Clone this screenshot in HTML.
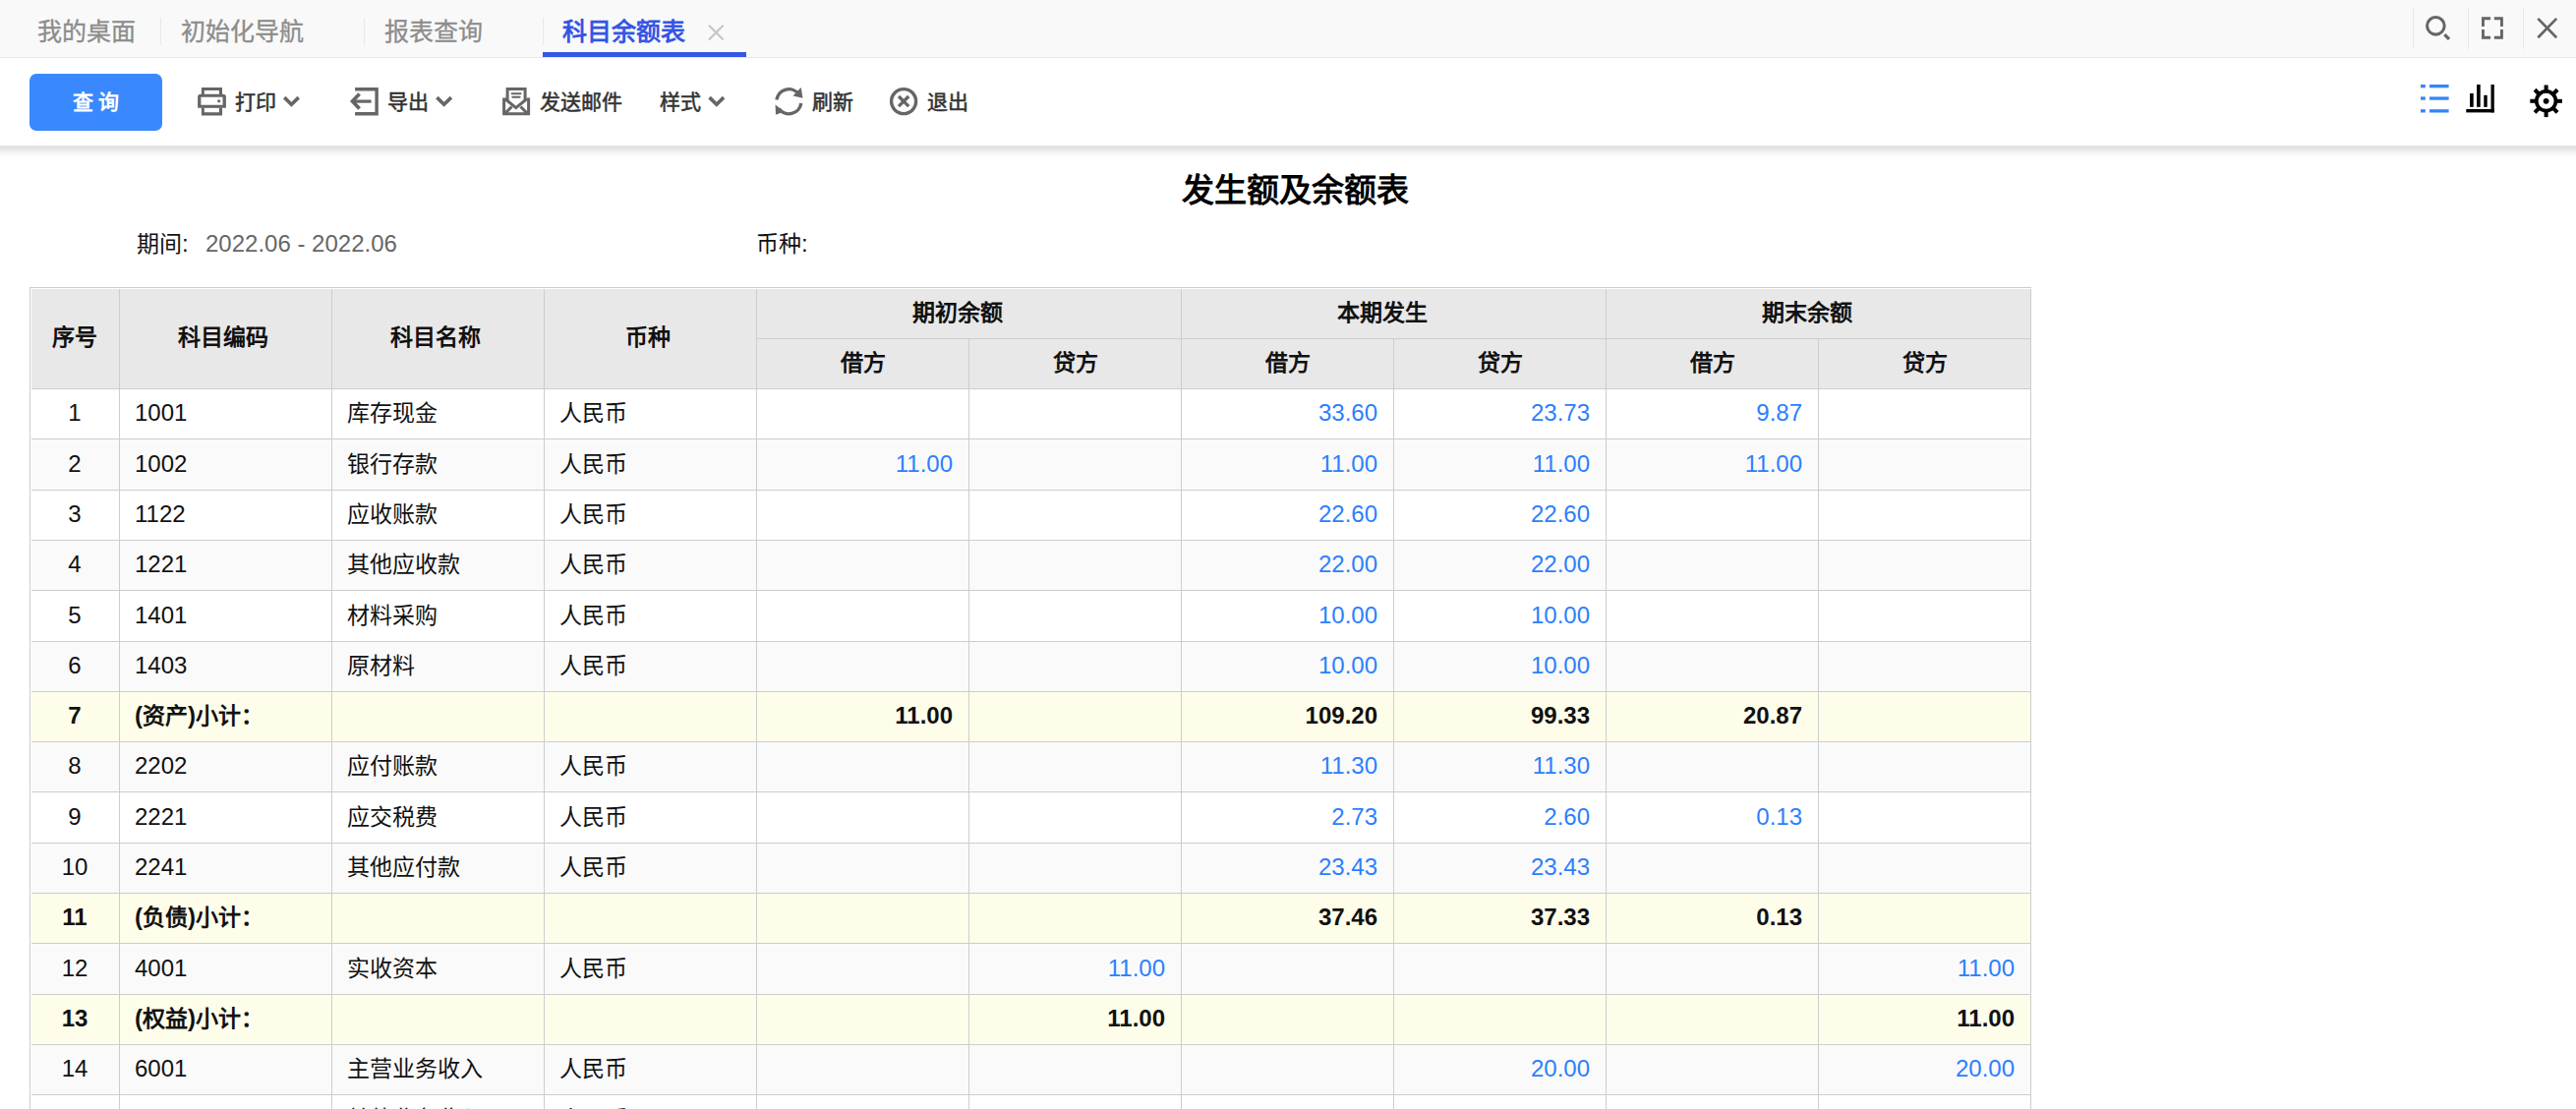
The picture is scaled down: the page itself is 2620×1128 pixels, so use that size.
<!DOCTYPE html>
<html lang="zh-CN">
<head>
<meta charset="utf-8">
<style>
html,body{margin:0;padding:0;}
body{width:2620px;height:1128px;overflow:hidden;position:relative;background:#fff;font-family:"Liberation Sans",sans-serif;color:#000;}
i{font-style:normal;}
#tabbar{position:absolute;left:0;top:0;width:2620px;height:58px;background:#f9f9f9;border-bottom:1px solid #e3e6f0;}
.tab{position:absolute;top:0;height:58px;line-height:64px;font-size:25px;color:#8c8c8c;white-space:nowrap;-webkit-text-stroke:0.3px #8c8c8c;}
.tab.act{color:#3356e6;font-weight:bold;-webkit-text-stroke:0;}
.tsep{position:absolute;top:18px;width:1px;height:28px;background:#e6e8ef;}
.rsep{position:absolute;top:8px;width:1px;height:42px;background:#e6e8ef;}
#uline{position:absolute;left:552px;top:53px;width:207px;height:5px;background:#3356e6;}
#toolbar{position:absolute;left:0;top:59px;width:2620px;height:89px;background:#fff;}
#shadow{position:absolute;left:0;top:148px;width:2620px;height:13px;background:linear-gradient(#e2e2e2 0%,#e4e4e4 20%,#f0f0f0 45%,#f9f9f9 70%,#fff 100%);}
#qbtn{position:absolute;left:30px;top:75px;width:135px;height:58px;border-radius:7px;background:#3a88fd;color:#fff;font-weight:bold;font-size:21px;line-height:58px;text-align:center;}
.tb{position:absolute;top:75px;height:58px;line-height:58px;font-size:21px;color:#333;-webkit-text-stroke:0.55px #333;white-space:nowrap;}
svg.ov{position:absolute;left:0;top:0;}
#title{position:absolute;top:160px;left:0;width:2634px;text-align:center;font-size:33px;font-weight:bold;line-height:68px;}
.meta{position:absolute;top:228px;line-height:40px;font-size:24px;white-space:nowrap;}
.meta i{font-size:23px;}
.ln{position:absolute;background:#cdcdcd;}
.hbg{position:absolute;background:#e8e8e8;}
.rbg{position:absolute;}
.odd{background:#fff;}
.even{background:#fafafa;}
.sub{background:#fefdea;}
.c{position:absolute;display:flex;align-items:center;white-space:nowrap;font-size:24px;}
.c span{line-height:26px;position:relative;top:-1px;}
.c i{font-size:23px;}
.c.ctr{justify-content:center;}
.c.lft{justify-content:flex-start;padding-left:15px;box-sizing:border-box;}
.c.rgt{justify-content:flex-end;padding-right:16px;box-sizing:border-box;}
.hd{font-weight:bold;color:#111;}
.td{color:#111;}
.b{font-weight:bold;}
.blue{color:#2b80fd;}
</style>
</head>
<body>
<div id="tabbar"></div>
<div class="tab" style="left:38px">我的桌面</div>
<div class="tsep" style="left:163px"></div>
<div class="tab" style="left:184px">初始化导航</div>
<div class="tsep" style="left:370px"></div>
<div class="tab" style="left:391px">报表查询</div>
<div class="tsep" style="left:552px"></div>
<div class="tab act" style="left:572px">科目余额表</div>
<div id="uline"></div>
<div class="rsep" style="left:2454px"></div>
<div class="rsep" style="left:2510px"></div>
<div class="rsep" style="left:2566px"></div>
<div id="toolbar"></div>
<div id="shadow"></div>
<div id="qbtn">查 询</div>
<div class="tb" style="left:239px">打印</div>
<div class="tb" style="left:394px">导出</div>
<div class="tb" style="left:549px">发送邮件</div>
<div class="tb" style="left:671px">样式</div>
<div class="tb" style="left:826px">刷新</div>
<div class="tb" style="left:943px">退出</div>
<svg class="ov" width="2620" height="160" viewBox="0 0 2620 160">
<!-- tab close -->
<path d="M721 25.8L735.7 40.5M735.7 25.8L721 40.5" stroke="#c6c6c6" stroke-width="2.2" fill="none"/>
<!-- search -->
<g stroke="#666" fill="none">
<circle cx="2477.35" cy="26.3" r="8.8" stroke-width="3.05"/>
<path d="M2486.3 35.1L2491 39.8" stroke-width="3.3"/>
<path d="M2525.45 26.9V18.75H2533.1M2536.8 18.75H2544.45V26.9M2544.45 30.1V38.25H2536.8M2533.1 38.25H2525.45V30.1" stroke-width="2.9"/>
<path d="M2581.3 18.9L2600.2 38.2M2600.2 18.9L2581.3 38.2" stroke-width="2.7"/>
</g>
<!-- toolbar icons -->
<g fill="#666" fill-rule="evenodd">
<path d="M204.9 89H226V96.3H204.9ZM207.8 92H222.9V96.3H207.8Z"/>
<path d="M204.1 95.8H226.9A3 3 0 0 1 229.9 98.8V109.7H201.1V98.8A3 3 0 0 1 204.1 95.8ZM204.4 98.7H226.5V106.8H204.4Z"/>
<path d="M204.9 109.4H226V117.4H204.9ZM207.8 109.7H222.9V114.2H207.8Z"/>
<circle cx="222.7" cy="102.8" r="1.6"/>
</g>
<g stroke="#666" fill="none" stroke-width="3.6" stroke-linejoin="miter">
<path d="M289.2 99.1L296.4 106.2L303.7 99.1"/>
<path d="M444.4 99.1L451.6 106.2L458.9 99.1"/>
<path d="M721.6 99.1L728.8 106.2L736.1 99.1"/>
</g>
<g stroke="#666" fill="none" stroke-width="3.4">
<path d="M361.1 90.7H383.1V115.7H361.1"/>
<path d="M377.6 103.1H359.5" stroke-width="3.2"/>
<path d="M365.6 95.6L358.5 103.1L365.6 110.6" stroke-width="3.7"/>
</g>
<g stroke="#666" fill="none" stroke-width="3">
<path d="M516.1 102.5V90.5H534.1V102.5"/>
<path d="M512.6 99.5V115.8H537.6V99.5"/>
<path d="M513.5 100.5L524.8 109.6L536 100.5"/>
<path d="M513 116L520.5 108.5M537 116L529.5 108.5"/>
</g>
<g stroke="#666" fill="none" stroke-width="1.9" stroke-linecap="round">
<path d="M520.6 95.2H529.6M521.3 98.8H528.7"/>
</g>
<!-- refresh -->
<g stroke="#666" fill="none" stroke-width="3.4">
<path d="M789.9 101.5A12.5 12.5 0 0 1 812.5 96"/>
<path d="M814.8 105A12.5 12.5 0 0 1 792.2 110.5"/>
</g>
<g fill="#666">
<path d="M814.7 88.9L816.5 99.7L806.5 97.5Z"/>
<path d="M788.6 106.4L789 116.8L797.5 113.5Z"/>
</g>
<!-- exit -->
<g stroke="#666" fill="none">
<circle cx="919.1" cy="103.1" r="12.5" stroke-width="3.4"/>
<path d="M914 98L924.2 108.2M924.2 98L914 108.2" stroke-width="3.2"/>
</g>
<!-- list icon -->
<g fill="#3385fd">
<rect x="2462" y="86" width="4.8" height="3.3"/><rect x="2471" y="86" width="19.6" height="3.3"/>
<rect x="2462" y="98.4" width="4.8" height="3.3"/><rect x="2471" y="98.4" width="19.6" height="3.3"/>
<rect x="2462" y="111.2" width="4.8" height="3.3"/><rect x="2471" y="111.2" width="19.6" height="3.3"/>
</g>
<!-- bar chart -->
<g fill="#000">
<rect x="2512.1" y="95" width="3.6" height="13.85"/>
<rect x="2519.1" y="86" width="3.6" height="22.85"/>
<rect x="2526.3" y="96.8" width="3.4" height="12.05"/>
<rect x="2533.5" y="86" width="3.3" height="28.4"/>
<rect x="2508.3" y="111" width="28.5" height="3.4"/>
</g>
<!-- gear -->
<g transform="translate(2589.6 102.8)">
<circle r="9.85" stroke="#000" stroke-width="3.7" fill="none"/>
<circle r="2.9" fill="#000"/>
<g fill="#000">
<rect x="-2" y="-16.3" width="4" height="7"/>
<rect x="-2" y="-16.3" width="4" height="7" transform="rotate(45)"/>
<rect x="-2" y="-16.3" width="4" height="7" transform="rotate(90)"/>
<rect x="-2" y="-16.3" width="4" height="7" transform="rotate(135)"/>
<rect x="-2" y="-16.3" width="4" height="7" transform="rotate(180)"/>
<rect x="-2" y="-16.3" width="4" height="7" transform="rotate(225)"/>
<rect x="-2" y="-16.3" width="4" height="7" transform="rotate(270)"/>
<rect x="-2" y="-16.3" width="4" height="7" transform="rotate(315)"/>
</g>
</g>
</svg>

<div id="tbl">
<div class="hbg" style="left:32px;top:294px;width:2033px;height:101px"></div>
<div class="ln" style="left:30px;top:292px;width:2036px;height:1px"></div>
<div class="ln" style="left:30px;top:292px;width:1px;height:836px"></div>
<div class="rbg odd" style="left:32px;top:396px;width:2033px;height:50px"></div>
<div class="rbg even" style="left:32px;top:447px;width:2033px;height:51px"></div>
<div class="rbg odd" style="left:32px;top:499px;width:2033px;height:50px"></div>
<div class="rbg even" style="left:32px;top:550px;width:2033px;height:50px"></div>
<div class="rbg odd" style="left:32px;top:601px;width:2033px;height:51px"></div>
<div class="rbg even" style="left:32px;top:653px;width:2033px;height:50px"></div>
<div class="rbg sub" style="left:32px;top:704px;width:2033px;height:50px"></div>
<div class="rbg even" style="left:32px;top:755px;width:2033px;height:50px"></div>
<div class="rbg odd" style="left:32px;top:806px;width:2033px;height:51px"></div>
<div class="rbg even" style="left:32px;top:858px;width:2033px;height:50px"></div>
<div class="rbg sub" style="left:32px;top:909px;width:2033px;height:50px"></div>
<div class="rbg even" style="left:32px;top:960px;width:2033px;height:51px"></div>
<div class="rbg sub" style="left:32px;top:1012px;width:2033px;height:50px"></div>
<div class="rbg even" style="left:32px;top:1063px;width:2033px;height:50px"></div>
<div class="rbg odd" style="left:32px;top:1114px;width:2033px;height:50px"></div>
<div class="ln" style="left:32px;top:395px;width:2034px;height:1px"></div>
<div class="ln" style="left:32px;top:446px;width:2034px;height:1px"></div>
<div class="ln" style="left:32px;top:498px;width:2034px;height:1px"></div>
<div class="ln" style="left:32px;top:549px;width:2034px;height:1px"></div>
<div class="ln" style="left:32px;top:600px;width:2034px;height:1px"></div>
<div class="ln" style="left:32px;top:652px;width:2034px;height:1px"></div>
<div class="ln" style="left:32px;top:703px;width:2034px;height:1px"></div>
<div class="ln" style="left:32px;top:754px;width:2034px;height:1px"></div>
<div class="ln" style="left:32px;top:805px;width:2034px;height:1px"></div>
<div class="ln" style="left:32px;top:857px;width:2034px;height:1px"></div>
<div class="ln" style="left:32px;top:908px;width:2034px;height:1px"></div>
<div class="ln" style="left:32px;top:959px;width:2034px;height:1px"></div>
<div class="ln" style="left:32px;top:1011px;width:2034px;height:1px"></div>
<div class="ln" style="left:32px;top:1062px;width:2034px;height:1px"></div>
<div class="ln" style="left:32px;top:1113px;width:2034px;height:1px"></div>
<div class="ln" style="left:32px;top:1164px;width:2034px;height:1px"></div>
<div class="ln" style="left:769px;top:344px;width:1297px;height:1px"></div>
<div class="ln" style="left:121px;top:294px;width:1px;height:834px"></div>
<div class="ln" style="left:337px;top:294px;width:1px;height:834px"></div>
<div class="ln" style="left:553px;top:294px;width:1px;height:834px"></div>
<div class="ln" style="left:769px;top:294px;width:1px;height:834px"></div>
<div class="ln" style="left:985px;top:344px;width:1px;height:784px"></div>
<div class="ln" style="left:1201px;top:294px;width:1px;height:834px"></div>
<div class="ln" style="left:1417px;top:344px;width:1px;height:784px"></div>
<div class="ln" style="left:1633px;top:294px;width:1px;height:834px"></div>
<div class="ln" style="left:1849px;top:344px;width:1px;height:784px"></div>
<div class="ln" style="left:2065px;top:294px;width:1px;height:834px"></div>
<div class="c hd ctr" style="left:31px;top:293px;width:90px;height:102px;"><span><i>序号</i></span></div>
<div class="c hd ctr" style="left:122px;top:293px;width:215px;height:102px;padding-right:6px;box-sizing:border-box"><span><i>科目编码</i></span></div>
<div class="c hd ctr" style="left:338px;top:293px;width:215px;height:102px;padding-right:6px;box-sizing:border-box"><span><i>科目名称</i></span></div>
<div class="c hd ctr" style="left:554px;top:293px;width:215px;height:102px;padding-right:6px;box-sizing:border-box"><span><i>币种</i></span></div>
<div class="c hd ctr" style="left:770px;top:293px;width:431px;height:51px;padding-right:23px;box-sizing:border-box"><span><i>期初余额</i></span></div>
<div class="c hd ctr" style="left:770px;top:345px;width:215px;height:50px;"><span><i>借方</i></span></div>
<div class="c hd ctr" style="left:986px;top:345px;width:215px;height:50px;"><span><i>贷方</i></span></div>
<div class="c hd ctr" style="left:1202px;top:293px;width:431px;height:51px;padding-right:23px;box-sizing:border-box"><span><i>本期发生</i></span></div>
<div class="c hd ctr" style="left:1202px;top:345px;width:215px;height:50px;"><span><i>借方</i></span></div>
<div class="c hd ctr" style="left:1418px;top:345px;width:215px;height:50px;"><span><i>贷方</i></span></div>
<div class="c hd ctr" style="left:1634px;top:293px;width:431px;height:51px;padding-right:23px;box-sizing:border-box"><span><i>期末余额</i></span></div>
<div class="c hd ctr" style="left:1634px;top:345px;width:215px;height:50px;"><span><i>借方</i></span></div>
<div class="c hd ctr" style="left:1850px;top:345px;width:215px;height:50px;"><span><i>贷方</i></span></div>
<div class="c td ctr" style="left:31px;top:396px;width:90px;height:50px;"><span>1</span></div>
<div class="c td lft" style="left:122px;top:396px;width:215px;height:50px;"><span>1001</span></div>
<div class="c td lft" style="left:338px;top:396px;width:215px;height:50px;"><span><i>库存现金</i></span></div>
<div class="c td lft" style="left:554px;top:396px;width:215px;height:50px;"><span><i>人民币</i></span></div>
<div class="c td num blue rgt" style="left:1202px;top:396px;width:215px;height:50px;"><span>33.60</span></div>
<div class="c td num blue rgt" style="left:1418px;top:396px;width:215px;height:50px;"><span>23.73</span></div>
<div class="c td num blue rgt" style="left:1634px;top:396px;width:215px;height:50px;"><span>9.87</span></div>
<div class="c td ctr" style="left:31px;top:447px;width:90px;height:51px;"><span>2</span></div>
<div class="c td lft" style="left:122px;top:447px;width:215px;height:51px;"><span>1002</span></div>
<div class="c td lft" style="left:338px;top:447px;width:215px;height:51px;"><span><i>银行存款</i></span></div>
<div class="c td lft" style="left:554px;top:447px;width:215px;height:51px;"><span><i>人民币</i></span></div>
<div class="c td num blue rgt" style="left:770px;top:447px;width:215px;height:51px;"><span>11.00</span></div>
<div class="c td num blue rgt" style="left:1202px;top:447px;width:215px;height:51px;"><span>11.00</span></div>
<div class="c td num blue rgt" style="left:1418px;top:447px;width:215px;height:51px;"><span>11.00</span></div>
<div class="c td num blue rgt" style="left:1634px;top:447px;width:215px;height:51px;"><span>11.00</span></div>
<div class="c td ctr" style="left:31px;top:499px;width:90px;height:50px;"><span>3</span></div>
<div class="c td lft" style="left:122px;top:499px;width:215px;height:50px;"><span>1122</span></div>
<div class="c td lft" style="left:338px;top:499px;width:215px;height:50px;"><span><i>应收账款</i></span></div>
<div class="c td lft" style="left:554px;top:499px;width:215px;height:50px;"><span><i>人民币</i></span></div>
<div class="c td num blue rgt" style="left:1202px;top:499px;width:215px;height:50px;"><span>22.60</span></div>
<div class="c td num blue rgt" style="left:1418px;top:499px;width:215px;height:50px;"><span>22.60</span></div>
<div class="c td ctr" style="left:31px;top:550px;width:90px;height:50px;"><span>4</span></div>
<div class="c td lft" style="left:122px;top:550px;width:215px;height:50px;"><span>1221</span></div>
<div class="c td lft" style="left:338px;top:550px;width:215px;height:50px;"><span><i>其他应收款</i></span></div>
<div class="c td lft" style="left:554px;top:550px;width:215px;height:50px;"><span><i>人民币</i></span></div>
<div class="c td num blue rgt" style="left:1202px;top:550px;width:215px;height:50px;"><span>22.00</span></div>
<div class="c td num blue rgt" style="left:1418px;top:550px;width:215px;height:50px;"><span>22.00</span></div>
<div class="c td ctr" style="left:31px;top:601px;width:90px;height:51px;"><span>5</span></div>
<div class="c td lft" style="left:122px;top:601px;width:215px;height:51px;"><span>1401</span></div>
<div class="c td lft" style="left:338px;top:601px;width:215px;height:51px;"><span><i>材料采购</i></span></div>
<div class="c td lft" style="left:554px;top:601px;width:215px;height:51px;"><span><i>人民币</i></span></div>
<div class="c td num blue rgt" style="left:1202px;top:601px;width:215px;height:51px;"><span>10.00</span></div>
<div class="c td num blue rgt" style="left:1418px;top:601px;width:215px;height:51px;"><span>10.00</span></div>
<div class="c td ctr" style="left:31px;top:653px;width:90px;height:50px;"><span>6</span></div>
<div class="c td lft" style="left:122px;top:653px;width:215px;height:50px;"><span>1403</span></div>
<div class="c td lft" style="left:338px;top:653px;width:215px;height:50px;"><span><i>原材料</i></span></div>
<div class="c td lft" style="left:554px;top:653px;width:215px;height:50px;"><span><i>人民币</i></span></div>
<div class="c td num blue rgt" style="left:1202px;top:653px;width:215px;height:50px;"><span>10.00</span></div>
<div class="c td num blue rgt" style="left:1418px;top:653px;width:215px;height:50px;"><span>10.00</span></div>
<div class="c td b ctr" style="left:31px;top:704px;width:90px;height:50px;"><span>7</span></div>
<div class="c td b lft" style="left:122px;top:704px;width:215px;height:50px;"><span>(<i>资产</i>)<i>小计：</i></span></div>
<div class="c td num b rgt" style="left:770px;top:704px;width:215px;height:50px;"><span>11.00</span></div>
<div class="c td num b rgt" style="left:1202px;top:704px;width:215px;height:50px;"><span>109.20</span></div>
<div class="c td num b rgt" style="left:1418px;top:704px;width:215px;height:50px;"><span>99.33</span></div>
<div class="c td num b rgt" style="left:1634px;top:704px;width:215px;height:50px;"><span>20.87</span></div>
<div class="c td ctr" style="left:31px;top:755px;width:90px;height:50px;"><span>8</span></div>
<div class="c td lft" style="left:122px;top:755px;width:215px;height:50px;"><span>2202</span></div>
<div class="c td lft" style="left:338px;top:755px;width:215px;height:50px;"><span><i>应付账款</i></span></div>
<div class="c td lft" style="left:554px;top:755px;width:215px;height:50px;"><span><i>人民币</i></span></div>
<div class="c td num blue rgt" style="left:1202px;top:755px;width:215px;height:50px;"><span>11.30</span></div>
<div class="c td num blue rgt" style="left:1418px;top:755px;width:215px;height:50px;"><span>11.30</span></div>
<div class="c td ctr" style="left:31px;top:806px;width:90px;height:51px;"><span>9</span></div>
<div class="c td lft" style="left:122px;top:806px;width:215px;height:51px;"><span>2221</span></div>
<div class="c td lft" style="left:338px;top:806px;width:215px;height:51px;"><span><i>应交税费</i></span></div>
<div class="c td lft" style="left:554px;top:806px;width:215px;height:51px;"><span><i>人民币</i></span></div>
<div class="c td num blue rgt" style="left:1202px;top:806px;width:215px;height:51px;"><span>2.73</span></div>
<div class="c td num blue rgt" style="left:1418px;top:806px;width:215px;height:51px;"><span>2.60</span></div>
<div class="c td num blue rgt" style="left:1634px;top:806px;width:215px;height:51px;"><span>0.13</span></div>
<div class="c td ctr" style="left:31px;top:858px;width:90px;height:50px;"><span>10</span></div>
<div class="c td lft" style="left:122px;top:858px;width:215px;height:50px;"><span>2241</span></div>
<div class="c td lft" style="left:338px;top:858px;width:215px;height:50px;"><span><i>其他应付款</i></span></div>
<div class="c td lft" style="left:554px;top:858px;width:215px;height:50px;"><span><i>人民币</i></span></div>
<div class="c td num blue rgt" style="left:1202px;top:858px;width:215px;height:50px;"><span>23.43</span></div>
<div class="c td num blue rgt" style="left:1418px;top:858px;width:215px;height:50px;"><span>23.43</span></div>
<div class="c td b ctr" style="left:31px;top:909px;width:90px;height:50px;"><span>11</span></div>
<div class="c td b lft" style="left:122px;top:909px;width:215px;height:50px;"><span>(<i>负债</i>)<i>小计：</i></span></div>
<div class="c td num b rgt" style="left:1202px;top:909px;width:215px;height:50px;"><span>37.46</span></div>
<div class="c td num b rgt" style="left:1418px;top:909px;width:215px;height:50px;"><span>37.33</span></div>
<div class="c td num b rgt" style="left:1634px;top:909px;width:215px;height:50px;"><span>0.13</span></div>
<div class="c td ctr" style="left:31px;top:960px;width:90px;height:51px;"><span>12</span></div>
<div class="c td lft" style="left:122px;top:960px;width:215px;height:51px;"><span>4001</span></div>
<div class="c td lft" style="left:338px;top:960px;width:215px;height:51px;"><span><i>实收资本</i></span></div>
<div class="c td lft" style="left:554px;top:960px;width:215px;height:51px;"><span><i>人民币</i></span></div>
<div class="c td num blue rgt" style="left:986px;top:960px;width:215px;height:51px;"><span>11.00</span></div>
<div class="c td num blue rgt" style="left:1850px;top:960px;width:215px;height:51px;"><span>11.00</span></div>
<div class="c td b ctr" style="left:31px;top:1012px;width:90px;height:50px;"><span>13</span></div>
<div class="c td b lft" style="left:122px;top:1012px;width:215px;height:50px;"><span>(<i>权益</i>)<i>小计：</i></span></div>
<div class="c td num b rgt" style="left:986px;top:1012px;width:215px;height:50px;"><span>11.00</span></div>
<div class="c td num b rgt" style="left:1850px;top:1012px;width:215px;height:50px;"><span>11.00</span></div>
<div class="c td ctr" style="left:31px;top:1063px;width:90px;height:50px;"><span>14</span></div>
<div class="c td lft" style="left:122px;top:1063px;width:215px;height:50px;"><span>6001</span></div>
<div class="c td lft" style="left:338px;top:1063px;width:215px;height:50px;"><span><i>主营业务收入</i></span></div>
<div class="c td lft" style="left:554px;top:1063px;width:215px;height:50px;"><span><i>人民币</i></span></div>
<div class="c td num blue rgt" style="left:1418px;top:1063px;width:215px;height:50px;"><span>20.00</span></div>
<div class="c td num blue rgt" style="left:1850px;top:1063px;width:215px;height:50px;"><span>20.00</span></div>
<div class="c td ctr" style="left:31px;top:1114px;width:90px;height:50px;"><span>15</span></div>
<div class="c td lft" style="left:122px;top:1114px;width:215px;height:50px;"><span>6051</span></div>
<div class="c td lft" style="left:338px;top:1114px;width:215px;height:50px;"><span><i>其他业务收入</i></span></div>
<div class="c td lft" style="left:554px;top:1114px;width:215px;height:50px;"><span><i>人民币</i></span></div>
</div>
<div id="title">发生额及余额表</div>
<div class="meta" style="left:139px;color:#111"><i>期间</i>:</div>
<div class="meta" style="left:209px;color:#666">2022.06 - 2022.06</div>
<div class="meta" style="left:769px;color:#111"><i>币种</i>:</div>
</body>
</html>
